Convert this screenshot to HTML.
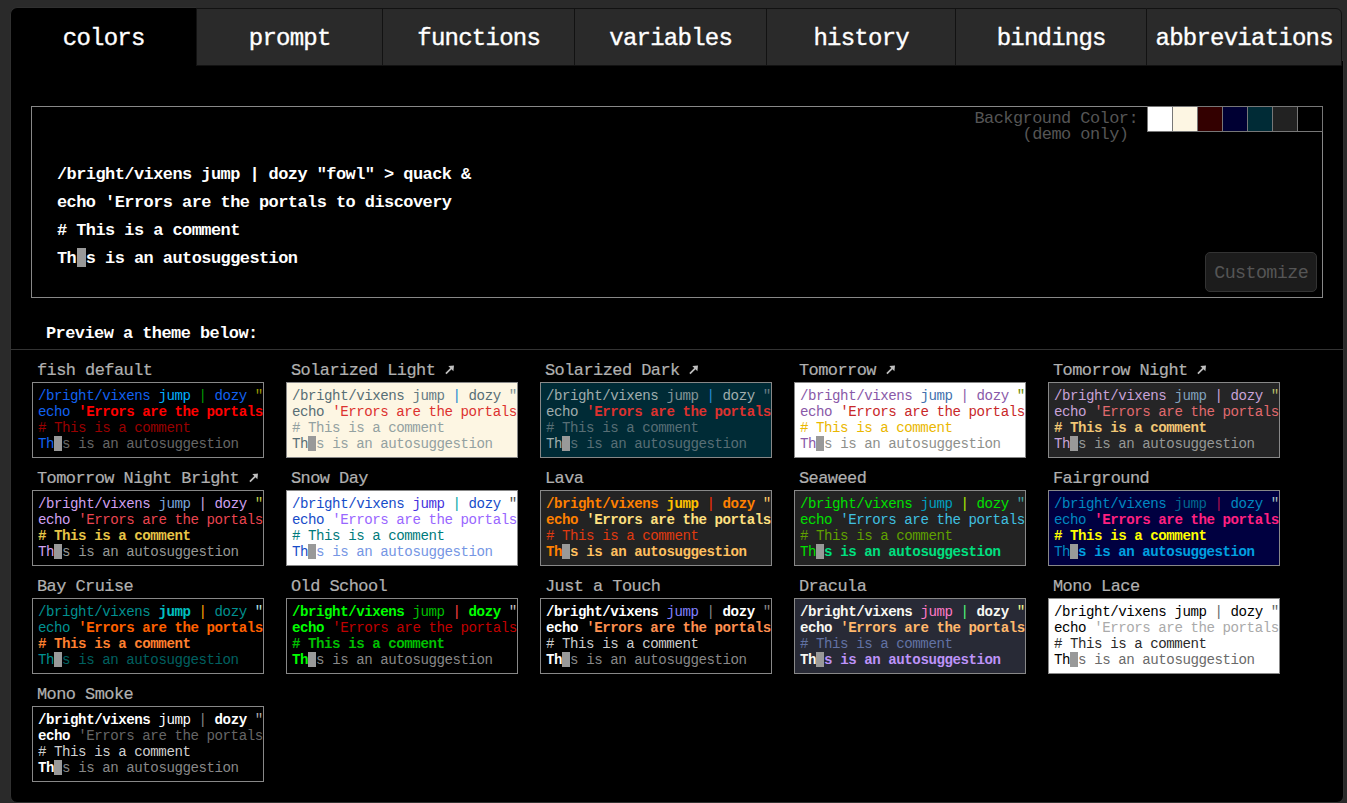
<!DOCTYPE html>
<html><head><meta charset="utf-8"><title>fish shell configuration</title>
<style>
html,body{margin:0;padding:0}
body{width:1347px;height:803px;overflow:hidden;background:#2a2a2a;position:relative;font-family:"Liberation Mono",monospace;color:#fff}
#box{position:absolute;left:10px;top:60px;width:1332px;height:741px;background:#000;border:1px solid #303030;border-radius:0 0 7px 7px}
.tab{position:absolute;top:8px;height:58px;box-sizing:border-box;background:#2a2a2a;border:1px solid #121212;border-right:none;font-size:24.03px;letter-spacing:-0.774px;text-indent:0.387px;color:#fff;text-align:center;white-space:nowrap}
.tab span{-webkit-text-stroke:0.35px currentColor;position:absolute;left:0;right:0;top:19.61px;line-height:20px}
.tab.sel{background:#000;border-color:#303030;border-bottom:none;border-right:none;left:10px!important;width:186px!important;top:7px;height:59px;border-top-left-radius:7px}
.tab.sel span{margin-top:1px}
.tab.last{border-right:1px solid #121212;border-top-right-radius:6px}
#demo{position:absolute;left:31px;top:106px;width:1292px;height:192px;box-sizing:border-box;border:1px solid #888}
.dl{position:absolute;left:57px;font-size:16.96px;letter-spacing:-0.545px;font-weight:bold;color:#fff;white-space:pre;line-height:20px}
.dcur{position:absolute;left:77px;top:248px;width:9px;height:19px;background:#999}
.bgl{position:absolute;left:800px;width:338px;text-align:right;font-size:16.96px;letter-spacing:-0.545px;line-height:20px;color:#555;white-space:pre}
.sw{position:absolute;top:106px;width:26px;height:26px;box-sizing:border-box;border:1px solid #777}
#cust{position:absolute;left:1205px;top:252px;width:112px;height:40px;box-sizing:border-box;background:#1c1c1c;border:1px solid #333;border-radius:5px}
#cust span{position:absolute;left:0;right:0;text-align:center;top:11.11px;line-height:20px;font-size:18.37px;letter-spacing:-0.588px;text-indent:0.294px;color:#555}
#prev{position:absolute;left:46px;font-size:16.96px;letter-spacing:-0.545px;font-weight:bold;line-height:20px;color:#fff;white-space:pre}
#sep{position:absolute;left:11px;top:349px;width:1332px;height:1px;background:#333}
.tt{position:absolute;font-size:16.96px;letter-spacing:-0.545px;line-height:20px;color:#b0b0b0;white-space:pre;-webkit-text-stroke:0.2px currentColor}
.arr{display:inline-block;vertical-align:0px}
.tb{position:absolute;width:232px;height:76px;box-sizing:border-box;border:1px solid #888;overflow:hidden}
.ln{position:absolute;left:5px;height:20px;line-height:20px;white-space:pre;font-size:14.13px;letter-spacing:-0.452px}
.cur{position:absolute;width:8px;height:15px;background:#999}
</style></head><body>
<div id="box"></div>
<div class="tab sel" style="left:11px;width:185px"><span>colors</span></div>
<div class="tab" style="left:196px;width:186px"><span>prompt</span></div>
<div class="tab" style="left:382px;width:192px"><span>functions</span></div>
<div class="tab" style="left:574px;width:192px"><span>variables</span></div>
<div class="tab" style="left:766px;width:189px"><span>history</span></div>
<div class="tab" style="left:955px;width:191px"><span>bindings</span></div>
<div class="tab last" style="left:1146px;width:196px"><span>abbreviations</span></div>
<div id="demo"></div>
<div class="dl" style="top:165.49px">/bright/vixens jump | dozy "fowl" &gt; quack &amp;</div>
<div class="dl" style="top:193.49px">echo 'Errors are the portals to discovery</div>
<div class="dl" style="top:221.49px"># This is a comment</div>
<div class="dl" style="top:249.49px">Th s is an autosuggestion</div>
<div class="dcur"></div>
<div class="bgl" style="top:109.09px">Background Color:</div>
<div class="bgl" style="top:124.89px">(demo only) </div>
<div class="sw" style="left:1147px;background:#ffffff"></div>
<div class="sw" style="left:1172px;background:#fdf6e3"></div>
<div class="sw" style="left:1197px;background:#330000"></div>
<div class="sw" style="left:1222px;background:#000033"></div>
<div class="sw" style="left:1247px;background:#002b36"></div>
<div class="sw" style="left:1272px;background:#222222"></div>
<div class="sw" style="left:1297px;background:#000000"></div>
<div id="cust"><span>Customize</span></div>
<div id="prev" style="top:324.49px">Preview a theme below:</div>
<div id="sep"></div>
<div class="tt" style="left:37px;top:361.09px">fish default</div><div class="tb" style="left:32px;top:382px;background:#000000"><div class="ln" style="top:3.24px"><span style="color:#1262f0">/bright/vixens</span> <span style="color:#00afff">jump</span> <span style="color:#009900">|</span> <span style="color:#1262f0">dozy</span> <span style="color:#999900">"fowl"</span><span style="color:#00afff"> &gt; quack &amp;</span></div><div class="ln" style="top:19.24px"><span style="color:#1262f0">echo</span> <span style="color:#ff0000;font-weight:bold">'Errors are the portals to discovery</span></div><div class="ln" style="top:35.24px"><span style="color:#990000"># This is a comment</span></div><div class="ln" style="top:51.24px"><span style="color:#1262f0">Th</span> <span></span><span style="color:#666666">s is an autosuggestion</span></div><div class="cur" style="left:21px;top:53px"></div></div>
<div class="tt" style="left:291px;top:361.09px">Solarized Light <svg class="arr" width="12" height="12" viewBox="0 0 12 12"><path d="M0.9 10.6 L6.2 5.3" stroke="#c0c0c0" stroke-width="1.7" fill="none"/><path d="M3.3 3.1 L9.0 2.4 L8.4 8.2 Z" fill="#c0c0c0"/></svg></div><div class="tb" style="left:286px;top:382px;background:#fdf6e3"><div class="ln" style="top:3.24px"><span style="color:#586e75">/bright/vixens</span> <span style="color:#657b83">jump</span> <span style="color:#268bd2">|</span> <span style="color:#586e75">dozy</span> <span style="color:#839496">"fowl"</span><span style="color:#657b83"> &gt; quack &amp;</span></div><div class="ln" style="top:19.24px"><span style="color:#586e75">echo</span> <span style="color:#dc322f">'Errors are the portals to discovery</span></div><div class="ln" style="top:35.24px"><span style="color:#93a1a1"># This is a comment</span></div><div class="ln" style="top:51.24px"><span style="color:#586e75">Th</span> <span></span><span style="color:#93a1a1">s is an autosuggestion</span></div><div class="cur" style="left:21px;top:53px"></div></div>
<div class="tt" style="left:545px;top:361.09px">Solarized Dark <svg class="arr" width="12" height="12" viewBox="0 0 12 12"><path d="M0.9 10.6 L6.2 5.3" stroke="#c0c0c0" stroke-width="1.7" fill="none"/><path d="M3.3 3.1 L9.0 2.4 L8.4 8.2 Z" fill="#c0c0c0"/></svg></div><div class="tb" style="left:540px;top:382px;background:#002b36"><div class="ln" style="top:3.24px"><span style="color:#a0adad">/bright/vixens</span> <span style="color:#839496">jump</span> <span style="color:#268bd2">|</span> <span style="color:#a0adad">dozy</span> <span style="color:#657b83">"fowl"</span><span style="color:#839496"> &gt; quack &amp;</span></div><div class="ln" style="top:19.24px"><span style="color:#a0adad">echo</span> <span style="color:#dc322f;font-weight:bold">'Errors are the portals to discovery</span></div><div class="ln" style="top:35.24px"><span style="color:#586e75"># This is a comment</span></div><div class="ln" style="top:51.24px"><span style="color:#a0adad">Th</span> <span></span><span style="color:#586e75">s is an autosuggestion</span></div><div class="cur" style="left:21px;top:53px"></div></div>
<div class="tt" style="left:799px;top:361.09px">Tomorrow <svg class="arr" width="12" height="12" viewBox="0 0 12 12"><path d="M0.9 10.6 L6.2 5.3" stroke="#c0c0c0" stroke-width="1.7" fill="none"/><path d="M3.3 3.1 L9.0 2.4 L8.4 8.2 Z" fill="#c0c0c0"/></svg></div><div class="tb" style="left:794px;top:382px;background:#ffffff"><div class="ln" style="top:3.24px"><span style="color:#8959a8">/bright/vixens</span> <span style="color:#4271ae">jump</span> <span style="color:#8959a8">|</span> <span style="color:#8959a8">dozy</span> <span style="color:#718c00">"fowl"</span><span style="color:#4271ae"> &gt; quack &amp;</span></div><div class="ln" style="top:19.24px"><span style="color:#8959a8">echo</span> <span style="color:#c82829">'Errors are the portals to discovery</span></div><div class="ln" style="top:35.24px"><span style="color:#eab700"># This is a comment</span></div><div class="ln" style="top:51.24px"><span style="color:#8959a8">Th</span> <span></span><span style="color:#8e908c">s is an autosuggestion</span></div><div class="cur" style="left:21px;top:53px"></div></div>
<div class="tt" style="left:1053px;top:361.09px">Tomorrow Night <svg class="arr" width="12" height="12" viewBox="0 0 12 12"><path d="M0.9 10.6 L6.2 5.3" stroke="#c0c0c0" stroke-width="1.7" fill="none"/><path d="M3.3 3.1 L9.0 2.4 L8.4 8.2 Z" fill="#c0c0c0"/></svg></div><div class="tb" style="left:1048px;top:382px;background:#252526"><div class="ln" style="top:3.24px"><span style="color:#c8a2d8">/bright/vixens</span> <span style="color:#81a2be">jump</span> <span style="color:#c8a2d8">|</span> <span style="color:#c8a2d8">dozy</span> <span style="color:#b5bd68">"fowl"</span><span style="color:#81a2be"> &gt; quack &amp;</span></div><div class="ln" style="top:19.24px"><span style="color:#c8a2d8">echo</span> <span style="color:#e06a6e">'Errors are the portals to discovery</span></div><div class="ln" style="top:35.24px"><span style="color:#f0c674;font-weight:bold"># This is a comment</span></div><div class="ln" style="top:51.24px"><span style="color:#c8a2d8">Th</span> <span></span><span style="color:#969896">s is an autosuggestion</span></div><div class="cur" style="left:21px;top:53px"></div></div>
<div class="tt" style="left:37px;top:469.09px">Tomorrow Night Bright <svg class="arr" width="12" height="12" viewBox="0 0 12 12"><path d="M0.9 10.6 L6.2 5.3" stroke="#c0c0c0" stroke-width="1.7" fill="none"/><path d="M3.3 3.1 L9.0 2.4 L8.4 8.2 Z" fill="#c0c0c0"/></svg></div><div class="tb" style="left:32px;top:490px;background:#000000"><div class="ln" style="top:3.24px"><span style="color:#d0a0f0">/bright/vixens</span> <span style="color:#7aa6da">jump</span> <span style="color:#c8a8e0">|</span> <span style="color:#d0a0f0">dozy</span> <span style="color:#b9ca4a">"fowl"</span><span style="color:#7aa6da"> &gt; quack &amp;</span></div><div class="ln" style="top:19.24px"><span style="color:#d0a0f0">echo</span> <span style="color:#ea4550">'Errors are the portals to discovery</span></div><div class="ln" style="top:35.24px"><span style="color:#e7c547;font-weight:bold"># This is a comment</span></div><div class="ln" style="top:51.24px"><span style="color:#d0a0f0">Th</span> <span></span><span style="color:#969896">s is an autosuggestion</span></div><div class="cur" style="left:21px;top:53px"></div></div>
<div class="tt" style="left:291px;top:469.09px">Snow Day</div><div class="tb" style="left:286px;top:490px;background:#ffffff"><div class="ln" style="top:3.24px"><span style="color:#164cc9">/bright/vixens</span> <span style="color:#4433dd">jump</span> <span style="color:#00a8a8">|</span> <span style="color:#164cc9">dozy</span> <span style="color:#4a4a4a">"fowl"</span><span style="color:#4433dd"> &gt; quack &amp;</span></div><div class="ln" style="top:19.24px"><span style="color:#164cc9">echo</span> <span style="color:#9966ff">'Errors are the portals to discovery</span></div><div class="ln" style="top:35.24px"><span style="color:#007b7b"># This is a comment</span></div><div class="ln" style="top:51.24px"><span style="color:#164cc9">Th</span> <span></span><span style="color:#7596e4">s is an autosuggestion</span></div><div class="cur" style="left:21px;top:53px"></div></div>
<div class="tt" style="left:545px;top:469.09px">Lava</div><div class="tb" style="left:540px;top:490px;background:#232323"><div class="ln" style="top:3.24px"><span style="color:#ff8000;font-weight:bold">/bright/vixens</span> <span style="color:#ffc000;font-weight:bold">jump</span> <span style="color:#ff3000">|</span> <span style="color:#ff8000;font-weight:bold">dozy</span> <span style="color:#ffcc66">"fowl"</span><span style="color:#ffc000;font-weight:bold"> &gt; quack &amp;</span></div><div class="ln" style="top:19.24px"><span style="color:#ff8000;font-weight:bold">echo</span> <span style="color:#ffe080;font-weight:bold">'Errors are the portals to discovery</span></div><div class="ln" style="top:35.24px"><span style="color:#e03a10"># This is a comment</span></div><div class="ln" style="top:51.24px"><span style="color:#ff8000;font-weight:bold">Th</span> <span></span><span style="color:#ffc060;font-weight:bold">s is an autosuggestion</span></div><div class="cur" style="left:21px;top:53px"></div></div>
<div class="tt" style="left:799px;top:469.09px">Seaweed</div><div class="tb" style="left:794px;top:490px;background:#232323"><div class="ln" style="top:3.24px"><span style="color:#00e000">/bright/vixens</span> <span style="color:#00a0c0">jump</span> <span style="color:#b0f000">|</span> <span style="color:#00e000">dozy</span> <span style="color:#40a0a0">"fowl"</span><span style="color:#00a0c0"> &gt; quack &amp;</span></div><div class="ln" style="top:19.24px"><span style="color:#00e000">echo</span> <span style="color:#40c0e0">'Errors are the portals to discovery</span></div><div class="ln" style="top:35.24px"><span style="color:#60a000"># This is a comment</span></div><div class="ln" style="top:51.24px"><span style="color:#00e000">Th</span> <span></span><span style="color:#00e080;font-weight:bold">s is an autosuggestion</span></div><div class="cur" style="left:21px;top:53px"></div></div>
<div class="tt" style="left:1053px;top:469.09px">Fairground</div><div class="tb" style="left:1048px;top:490px;background:#000040"><div class="ln" style="top:3.24px"><span style="color:#0088c0">/bright/vixens</span> <span style="color:#006890">jump</span> <span style="color:#b01050">|</span> <span style="color:#0088c0">dozy</span> <span style="color:#a0c0c0">"fowl"</span><span style="color:#006890"> &gt; quack &amp;</span></div><div class="ln" style="top:19.24px"><span style="color:#0088c0">echo</span> <span style="color:#ff2080;font-weight:bold">'Errors are the portals to discovery</span></div><div class="ln" style="top:35.24px"><span style="color:#ffff00;font-weight:bold"># This is a comment</span></div><div class="ln" style="top:51.24px"><span style="color:#0088c0">Th</span> <span></span><span style="color:#00a0e0;font-weight:bold">s is an autosuggestion</span></div><div class="cur" style="left:21px;top:53px"></div></div>
<div class="tt" style="left:37px;top:577.09px">Bay Cruise</div><div class="tb" style="left:32px;top:598px;background:#000000"><div class="ln" style="top:3.24px"><span style="color:#009090">/bright/vixens</span> <span style="color:#00c0c0;font-weight:bold">jump</span> <span style="color:#ffa000">|</span> <span style="color:#009090">dozy</span> <span style="color:#b0e0e0">"fowl"</span><span style="color:#00c0c0;font-weight:bold"> &gt; quack &amp;</span></div><div class="ln" style="top:19.24px"><span style="color:#009090">echo</span> <span style="color:#ff6000;font-weight:bold">'Errors are the portals to discovery</span></div><div class="ln" style="top:35.24px"><span style="color:#ff8030;font-weight:bold"># This is a comment</span></div><div class="ln" style="top:51.24px"><span style="color:#009090">Th</span> <span></span><span style="color:#006060">s is an autosuggestion</span></div><div class="cur" style="left:21px;top:53px"></div></div>
<div class="tt" style="left:291px;top:577.09px">Old School</div><div class="tb" style="left:286px;top:598px;background:#000000"><div class="ln" style="top:3.24px"><span style="color:#00ff00;font-weight:bold">/bright/vixens</span> <span style="color:#00c000">jump</span> <span style="color:#ff4040">|</span> <span style="color:#00ff00;font-weight:bold">dozy</span> <span style="color:#c0c0c0">"fowl"</span><span style="color:#00c000"> &gt; quack &amp;</span></div><div class="ln" style="top:19.24px"><span style="color:#00ff00;font-weight:bold">echo</span> <span style="color:#c00000">'Errors are the portals to discovery</span></div><div class="ln" style="top:35.24px"><span style="color:#00c000;font-weight:bold"># This is a comment</span></div><div class="ln" style="top:51.24px"><span style="color:#00ff00;font-weight:bold">Th</span> <span></span><span style="color:#888888">s is an autosuggestion</span></div><div class="cur" style="left:21px;top:53px"></div></div>
<div class="tt" style="left:545px;top:577.09px">Just a Touch</div><div class="tb" style="left:540px;top:598px;background:#000000"><div class="ln" style="top:3.24px"><span style="color:#ffffff;font-weight:bold">/bright/vixens</span> <span style="color:#8080ff">jump</span> <span style="color:#888888">|</span> <span style="color:#ffffff;font-weight:bold">dozy</span> <span style="color:#888888">"fowl"</span><span style="color:#8080ff"> &gt; quack &amp;</span></div><div class="ln" style="top:19.24px"><span style="color:#ffffff;font-weight:bold">echo</span> <span style="color:#ff9050;font-weight:bold">'Errors are the portals to discovery</span></div><div class="ln" style="top:35.24px"><span style="color:#cccccc"># This is a comment</span></div><div class="ln" style="top:51.24px"><span style="color:#ffffff;font-weight:bold">Th</span> <span></span><span style="color:#888888">s is an autosuggestion</span></div><div class="cur" style="left:21px;top:53px"></div></div>
<div class="tt" style="left:799px;top:577.09px">Dracula</div><div class="tb" style="left:794px;top:598px;background:#282a36"><div class="ln" style="top:3.24px"><span style="color:#f8f8f2;font-weight:bold">/bright/vixens</span> <span style="color:#ff79c6">jump</span> <span style="color:#50fa7b">|</span> <span style="color:#f8f8f2;font-weight:bold">dozy</span> <span style="color:#f1fa8c">"fowl"</span><span style="color:#ff79c6"> &gt; quack &amp;</span></div><div class="ln" style="top:19.24px"><span style="color:#f8f8f2;font-weight:bold">echo</span> <span style="color:#ffb86c;font-weight:bold">'Errors are the portals to discovery</span></div><div class="ln" style="top:35.24px"><span style="color:#6272a4"># This is a comment</span></div><div class="ln" style="top:51.24px"><span style="color:#f8f8f2;font-weight:bold">Th</span> <span></span><span style="color:#bd93f9;font-weight:bold">s is an autosuggestion</span></div><div class="cur" style="left:21px;top:53px"></div></div>
<div class="tt" style="left:1053px;top:577.09px">Mono Lace</div><div class="tb" style="left:1048px;top:598px;background:#ffffff"><div class="ln" style="top:3.24px"><span style="color:#000000">/bright/vixens</span> <span style="color:#000000">jump</span> <span style="color:#666666">|</span> <span style="color:#000000">dozy</span> <span style="color:#666666">"fowl"</span><span style="color:#000000"> &gt; quack &amp;</span></div><div class="ln" style="top:19.24px"><span style="color:#000000">echo</span> <span style="color:#aaaaaa">'Errors are the portals to discovery</span></div><div class="ln" style="top:35.24px"><span style="color:#2a2a2a"># This is a comment</span></div><div class="ln" style="top:51.24px"><span style="color:#000000">Th</span> <span></span><span style="color:#6a6a6a">s is an autosuggestion</span></div><div class="cur" style="left:21px;top:53px"></div></div>
<div class="tt" style="left:37px;top:685.09px">Mono Smoke</div><div class="tb" style="left:32px;top:706px;background:#000000"><div class="ln" style="top:3.24px"><span style="color:#ffffff;font-weight:bold">/bright/vixens</span> <span style="color:#ffffff">jump</span> <span style="color:#888888">|</span> <span style="color:#ffffff;font-weight:bold">dozy</span> <span style="color:#aaaaaa">"fowl"</span><span style="color:#ffffff"> &gt; quack &amp;</span></div><div class="ln" style="top:19.24px"><span style="color:#ffffff;font-weight:bold">echo</span> <span style="color:#666666">'Errors are the portals to discovery</span></div><div class="ln" style="top:35.24px"><span style="color:#d0d0d0"># This is a comment</span></div><div class="ln" style="top:51.24px"><span style="color:#ffffff;font-weight:bold">Th</span> <span></span><span style="color:#888888">s is an autosuggestion</span></div><div class="cur" style="left:21px;top:53px"></div></div>
</body></html>
